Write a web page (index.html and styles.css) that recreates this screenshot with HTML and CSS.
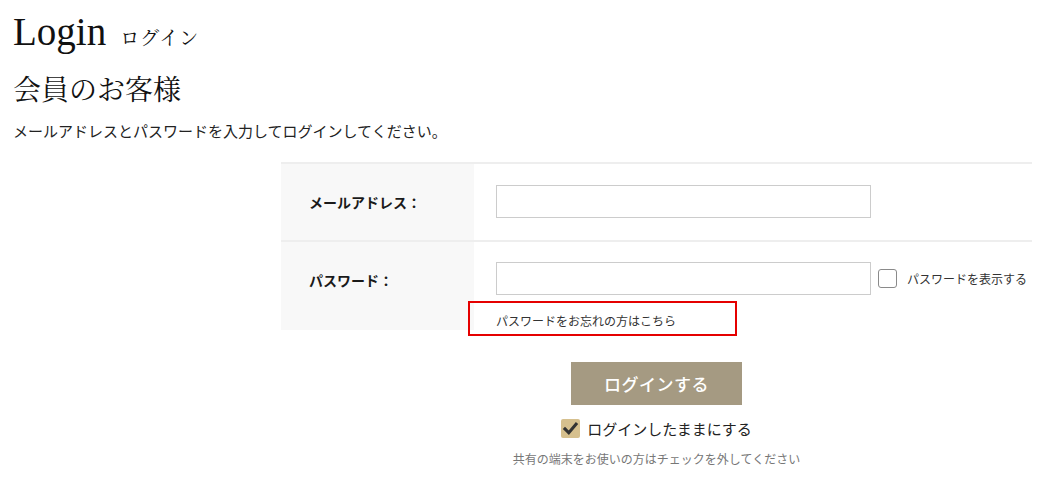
FILE: index.html
```html
<!DOCTYPE html>
<html lang="ja">
<head>
<meta charset="utf-8">
<title>Login</title>
<link rel="stylesheet" href="styles.css">
</head>
<body>
<div class="page">
  <h1 class="title">Login<span class="title-sub">ログイン</span></h1>
  <h2 class="section">会員のお客様</h2>
  <p class="lead">メールアドレスとパスワードを入力してログインしてください。</p>

  <form class="login">
    <div class="row row-mail">
      <div class="label">メールアドレス：</div>
      <div class="field">
        <input class="text-input" type="text">
      </div>
    </div>
    <div class="row row-pass">
      <div class="label">パスワード：</div>
      <div class="field">
        <div class="pass-line">
          <input class="text-input" type="password">
          <label class="show-pass"><span class="box"></span>パスワードを表示する</label>
        </div>
        <div class="forgot-wrap">
          <a class="forgot" href="#">パスワードをお忘れの方はこちら</a>
          <span class="mark"></span>
        </div>
      </div>
    </div>

    <div class="actions">
      <button class="submit" type="button">ログインする</button>
      <label class="keep">
        <span class="box checked"><svg viewBox="0 0 20 20" width="17" height="17"><path d="M3.5 10.5 L8 15 L16.5 5" fill="none" stroke="#333" stroke-width="3.6" stroke-linecap="square"/></svg></span>
        ログインしたままにする
      </label>
      <p class="note">共有の端末をお使いの方はチェックを外してください</p>
    </div>
  </form>
</div>
</body>
</html>
```

FILE: styles.css
```css
html, body {
  margin: 0;
  padding: 0;
  background: #fff;
}

body {
  font-family: "Noto Sans CJK JP", "Noto Sans", sans-serif;
  color: #222;
}

.page {
  padding: 0 10px 0 13px;
}

.title {
  margin: 0;
  padding-top: 10px;
  font-family: "Liberation Serif", "Noto Serif CJK JP", "Noto Sans CJK JP", serif;
  font-weight: normal;
  font-size: 39px;
  line-height: 44px;
  color: #111;
}

.title-sub {
  font-size: 19px;
  margin-left: 14px;
  letter-spacing: 1px;
}

.section {
  margin: 11px 0 0;
  font-family: "Noto Serif CJK JP", "Liberation Serif", "Noto Sans CJK JP", serif;
  font-weight: normal;
  font-size: 28px;
  line-height: 32px;
  color: #111;
}

.lead {
  margin: 16px 0 0;
  font-size: 15px;
  line-height: 22px;
  color: #222;
}

.login {
  width: 751px;
  margin: 20px 0 0 auto;
}

.row {
  display: grid;
  grid-template-columns: 193px 1fr;
  border-top: 2px solid #eeeeee;
}

.label {
  background: #f8f8f8;
  display: flex;
  align-items: center;
  padding-left: 28px;
  font-size: 14px;
  font-weight: bold;
  color: #1a1a1a;
}

.row-pass .label {
  align-items: flex-start;
  padding-top: 28px;
}

.field {
  padding: 21px 0 22px 22px;
}

.row-pass .field {
  padding: 20px 0 5px 22px;
}

.text-input {
  box-sizing: border-box;
  width: 375px;
  height: 33px;
  border: 1px solid #cccccc;
  margin: 0;
  padding: 0 8px;
  display: block;
  background: #fff;
}

.pass-line {
  display: flex;
  align-items: center;
}

.show-pass {
  display: flex;
  align-items: center;
  margin-left: 7px;
  font-size: 12px;
  color: #333;
}

.box {
  box-sizing: border-box;
  width: 19px;
  height: 19px;
  border: 1px solid #8a8a8a;
  border-radius: 3px;
  background: #fff;
  margin-right: 10px;
  display: inline-flex;
  align-items: center;
  justify-content: center;
}

.forgot-wrap {
  position: relative;
  margin-top: 12px;
  height: 18px;
}

.forgot {
  font-size: 12px;
  line-height: 18px;
  color: #333;
  text-decoration: none;
}

.mark {
  position: absolute;
  left: -28px;
  top: -6px;
  width: 269px;
  height: 35px;
  box-sizing: border-box;
  border: 2px solid #e50000;
}

.actions {
  display: flex;
  flex-direction: column;
  align-items: center;
  padding-top: 32px;
}

.submit {
  width: 171px;
  height: 43px;
  border: none;
  background: #a59a82;
  color: #fff;
  font-family: "Noto Sans CJK JP", sans-serif;
  font-size: 17px;
  font-weight: 500;
  letter-spacing: 0.5px;
  cursor: pointer;
}

.keep {
  display: flex;
  align-items: center;
  margin-top: 14px;
  font-size: 15px;
  line-height: 19px;
  color: #222;
}

.keep .box {
  margin-right: 7px;
}

.box.checked {
  background: #d6c08e;
  border: none;
  border-radius: 2px;
}

.note {
  margin: 12px 0 0;
  font-size: 12px;
  line-height: 18px;
  color: #777;
}
```
